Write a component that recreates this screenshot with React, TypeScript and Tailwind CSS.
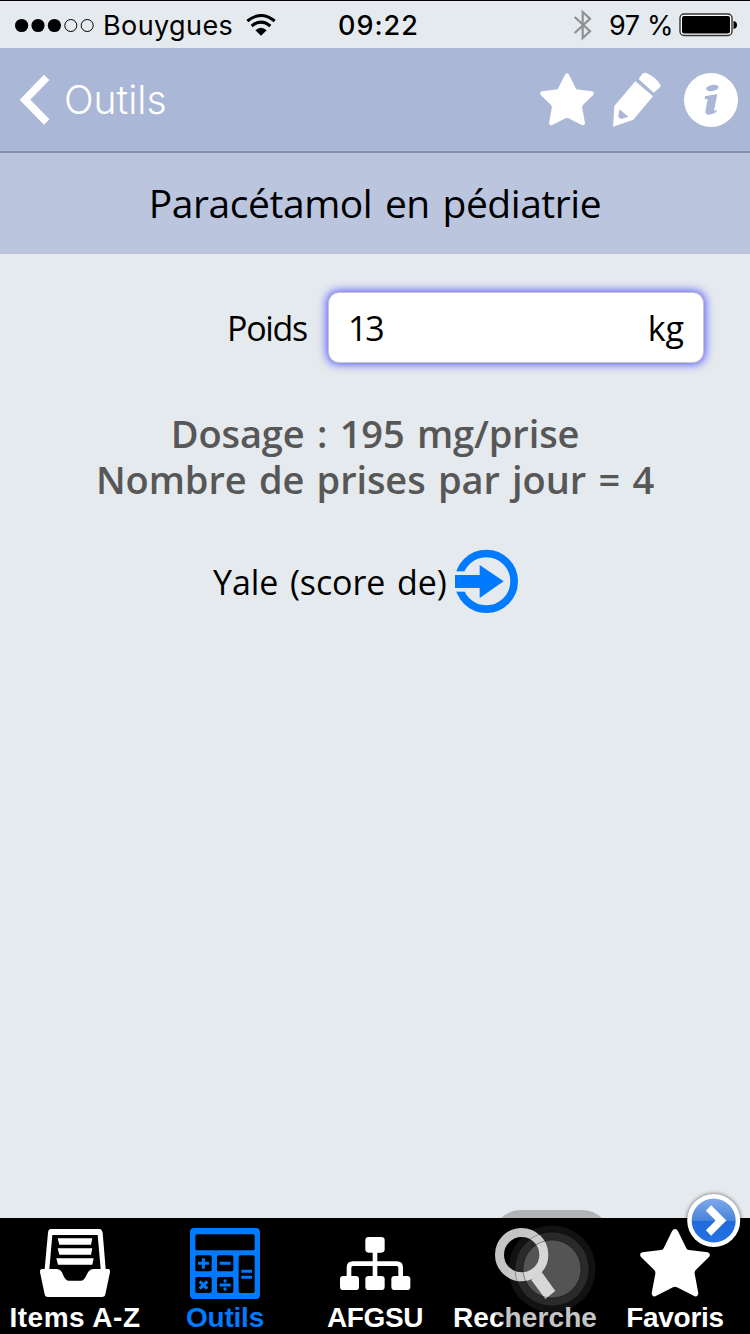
import React, { useState } from 'react';

interface TabItemProps {
  label: string;
  active?: boolean;
  labelClass: string;
  children: React.ReactNode;
}

const STAR_PATH =
  'M126 10 Q129 3 135 3 Q141 3 144 10 L169 61 Q171 66 177 66 L233 73 Q244 77 237 87 L198 125 Q193 130 194 137 L205 196 Q204 207 194 205 L141 178 Q135 175 129 178 L76 205 Q66 207 65 196 L76 137 Q77 130 72 125 L33 87 Q26 77 37 73 L93 66 Q99 66 101 61 Z';

const TabItem: React.FC<TabItemProps> = ({ label, active, labelClass, children }) => {
  return (
    <button className={`flex flex-col items-center w-[150px] pt-2.5 ${active ? 'text-[#007aff]' : 'text-white'}`}>
      <svg width="90" height="74" viewBox="0 0 270 222" fill="currentColor">
        {children}
      </svg>
      <span className={`h-8 leading-8 text-[28px] font-bold whitespace-nowrap ${labelClass}`}>{label}</span>
    </button>
  );
};

const StatusBar: React.FC = () => {
  return (
    <div className="flex items-center h-12 border-t border-black font-[Inter,sans-serif] text-[27px] leading-[48px] whitespace-nowrap">
      <svg className="ml-[14px]" width="82" height="16" viewBox="0 0 82 16">
        <circle cx="7.6" cy="8.5" r="6.6" />
        <circle cx="24" cy="8.5" r="6.6" />
        <circle cx="40.4" cy="8.5" r="6.6" />
        <circle cx="56.8" cy="8.5" r="6" fill="none" stroke="#000" />
        <circle cx="73.2" cy="8.5" r="6" fill="none" stroke="#000" />
      </svg>
      <span className="ml-[7px] w-[130px] pt-[3px] tracking-[0.4px]">Bouygues</span>
      <svg className="ml-[13px]" width="30" height="22" viewBox="0 0 90 66">
        <path d="M4 21 Q45 -12 86 21" fill="none" stroke="#000" strokeWidth="9" />
        <path d="M17 36 Q45 13 73 36" fill="none" stroke="#000" strokeWidth="9" />
        <path d="M28 49 Q45 34 62 49 L45 65 Z" />
      </svg>
      <span className="ml-[62px] w-[84px] pt-[3px] font-medium tracking-[1px]">09:22</span>
      <svg className="ml-[151px]" width="20" height="32" viewBox="0 0 60 96">
        <path d="M5 24 L51 67 L29 87 V9 L51 29 L5 72" fill="none" stroke="#8d9093" strokeWidth="6.5" />
      </svg>
      <span className="ml-[16px] w-[64px] pt-[3px] tracking-[-0.4px]">97 %</span>
      <svg className="ml-[6px]" width="58" height="24" viewBox="0 0 58 24">
        <rect x="1" y="1" width="52" height="21.5" rx="4" fill="#fff" stroke="#333" strokeWidth="1.4" />
        <rect x="3" y="3" width="48" height="17.5" rx="2" />
        <path d="M54.5 8 Q58 8.5 58 12 Q58 15.5 54.5 16 Z" />
      </svg>
    </div>
  );
};

const NavBar: React.FC = () => {
  return (
    <div className="flex items-center h-[105px] bg-[#aab7d6] border-b-2 border-[#878fa9] text-white">
      <svg className="ml-[18px]" width="34" height="52" viewBox="54 222 102 156">
        <path d="M140 232 L75 299 L140 366" fill="none" stroke="#fff" strokeWidth="23" />
      </svg>
      <span className="ml-[12px] w-[110px] font-[Inter,sans-serif] font-light text-[39px] leading-[52px]">Outils</span>
      <svg className="ml-auto" width="56" height="56" viewBox="60 215 168 168" fill="#fff">
        <path d={STAR_PATH} transform="translate(36.9 216.7) scale(0.771)" />
      </svg>
      <svg className="ml-[16px]" width="50" height="56" viewBox="277 214 150 168" fill="#fff">
        <path d="M357 235 L367 221 Q373 212 386 220 Q408 230 421 251 Q425 257 419 262 L402 276 Z" />
        <path fillRule="evenodd" d="M347 242 L400 287 L341 357 L280 378 L284 316 Z M299 326 L296 349 L304 355 L326 348 Z" />
      </svg>
      <svg className="ml-[21px] mr-[11px]" width="56" height="56" viewBox="489 216 168 168">
        <circle cx="573" cy="300" r="81" fill="#fff" />
        <ellipse cx="577" cy="264" rx="19" ry="9" fill="#aab7d6" transform="rotate(-12 577 264)" />
        <path d="M555 289 L592 282 L582 332 L591 330 L588 337 Q575 346 562 344 Q555 342 556 334 L563 297 L554 298 Z" fill="#aab7d6" />
      </svg>
    </div>
  );
};

const TabBar: React.FC = () => {
  return (
    <div className="relative flex h-[116px] bg-black font-['Liberation_Sans',Arial,sans-serif]">
      <TabItem label="Items A-Z" labelClass="tracking-[0.5px]">
        <path
          fillRule="evenodd"
          d="M62 3 H208 Q216 4 218 14 L227 123 H236 Q241 124 240 133 L226 199 Q225 207 216 207 H54 Q45 207 44 199 L30 133 Q29 124 35 123 H44 L54 14 Q55 4 62 3 Z M67 21 L58 123 H80 Q94 124 99 140 Q106 158 117 158 H152 Q163 158 170 140 Q177 124 190 123 H212 L203 21 Z"
        />
        <path d="M83 31 H187 L183 50 H88 Z M83 61 H187 L183 80 H88 Z M79 91 H191 L187 110 H84 Z" />
      </TabItem>
      <TabItem label="Outils" active labelClass="tracking-[-0.2px]">
        <path
          fillRule="evenodd"
          d="M42 0 H228 Q240 0 240 12 V201 Q240 213 228 213 H42 Q30 213 30 201 V12 Q30 0 42 0 Z M51 19 Q46 19 46 24 V62 Q46 67 51 67 H219 Q224 67 224 62 V24 Q224 19 219 19 Z M51 82 Q46 82 46 87 V125 Q46 130 51 130 H90 Q95 130 95 125 V87 Q95 82 90 82 Z M116 82 Q111 82 111 87 V125 Q111 130 116 130 H155 Q160 130 160 125 V87 Q160 82 155 82 Z M181 82 Q176 82 176 87 V190 Q176 195 181 195 H219 Q224 195 224 190 V87 Q224 82 219 82 Z M51 147 Q46 147 46 152 V190 Q46 195 51 195 H90 Q95 195 95 190 V152 Q95 147 90 147 Z M116 147 Q111 147 111 152 V190 Q111 195 116 195 H155 Q160 195 160 190 V152 Q160 147 155 147 Z"
        />
        <path
          d="M70 91 V122 M54 106 H87 M119 106 H152 M184 130 H216 M184 148 H216 M59 160 L82 182 M82 160 L59 182 M119 171 H152"
          stroke="currentColor"
          strokeWidth="9"
        />
        <circle cx="135" cy="159" r="5" />
        <circle cx="135" cy="183" r="5" />
      </TabItem>
      <TabItem label="AFGSU" labelClass="tracking-[-0.4px]">
        <rect x="106" y="27" width="58" height="47" rx="10" />
        <rect x="30" y="144" width="57" height="42" rx="10" />
        <rect x="106" y="144" width="58" height="42" rx="10" />
        <rect x="184" y="144" width="57" height="42" rx="10" />
        <path d="M135 70 V150 M57 150 V119 Q57 107 69 107 H200 Q212 107 212 119 V150" fill="none" stroke="currentColor" strokeWidth="14" />
      </TabItem>
      <TabItem label="Recherche" labelClass="tracking-[0.1px]">
        <circle cx="125" cy="80" r="66.5" fill="none" stroke="currentColor" strokeWidth="27" />
        <path d="M154 156 L185 132 L226 189 L196 213 Z" />
      </TabItem>
      <TabItem label="Favoris" labelClass="tracking-[-0.3px]">
        <path d={STAR_PATH} />
      </TabItem>

      {/* floating assistive button */}
      <div className="absolute left-[492px] top-[-8px] w-[119px] h-[120px] rounded-[29px] bg-black/23">
        <svg width="119" height="120" viewBox="0 0 119 120" fill="#fff">
          <circle cx="60" cy="59" r="43.5" fillOpacity="0.07" />
          <circle cx="60" cy="59" r="37" fillOpacity="0.1" stroke="#000" strokeOpacity="0.3" />
          <circle cx="60" cy="59" r="29" fillOpacity="0.2" stroke="#000" strokeOpacity="0.4" />
        </svg>
      </div>

      <svg className="absolute left-[684px] top-[-27px] drop-shadow-[0_0_2px_rgba(0,0,0,0.6)]" width="60" height="60" viewBox="0 0 60 60">
        <defs>
          <linearGradient id="gloss" x1="0" y1="0" x2="0" y2="1">
            <stop offset="0" stopColor="#80aae9" />
            <stop offset="0.5" stopColor="#4983dc" />
            <stop offset="0.52" stopColor="#226bdb" />
            <stop offset="1" stopColor="#2471e2" />
          </linearGradient>
        </defs>
        <circle cx="29.7" cy="29.5" r="26.5" fill="#fff" />
        <circle cx="29.7" cy="29.5" r="22" fill="url(#gloss)" />
        <path d="M24.5 17 L37 29.5 L24.5 42" fill="none" stroke="#fff" strokeWidth="7.5" />
      </svg>
    </div>
  );
};

const App: React.FC = () => {
  const [weight, setWeight] = useState('13');
  const dose = Number(weight) * 15;

  return (
    <div className="flex flex-col w-[750px] h-[1334px] overflow-hidden bg-[#e5eaee] text-black">
      <StatusBar />
      <NavBar />
      <h1 className="h-[101px] bg-[#bcc5de] text-center font-['Open_Sans',sans-serif] text-[39px] leading-[99px] tracking-[-0.45px] [word-spacing:3px]">
        Paracétamol en pédiatrie
      </h1>

      <main className="flex-1 font-['Open_Sans',sans-serif] text-[34px]">
        <div className="flex items-center mt-[38px] ml-[227px]">
          <label htmlFor="weight" className="w-[101px] pt-0.5 tracking-[-1.3px]">
            Poids
          </label>
          <div className="flex items-center w-[376px] h-[71px] px-[19px] bg-white border border-[#c5c5cc] rounded-[11px] shadow-[0_0_9px_2px_#6666ff]">
            <input
              id="weight"
              className="flex-1 min-w-0 pt-0.5 outline-none tracking-[-2.2px]"
              value={weight}
              onChange={(e) => setWeight(e.target.value)}
            />
            <span className="pt-0.5">kg</span>
          </div>
        </div>

        <p className="mt-[47px] text-center text-[38px] leading-[46px] font-semibold text-[#575757] tracking-[-0.1px] [word-spacing:2.6px]">
          Dosage : {dose} mg/prise
          <br />
          Nombre de prises par jour = 4
        </p>

        <div className="flex items-center mt-[47px] ml-[213px]">
          <span className="w-[241px] leading-[64px] whitespace-nowrap tracking-[-0.1px] [word-spacing:3px]">Yale (score de)</span>
          <svg width="66" height="66" viewBox="792 57 198 198" fill="#007aff">
            <circle cx="889" cy="154" r="83.5" fill="none" stroke="#007aff" strokeWidth="23" />
            <rect x="792" y="124" width="50" height="61" fill="#e5eaee" />
            <path d="M795 135 H869 V105 L941 154 L869 204 V174 H795 Z" />
          </svg>
        </div>
      </main>

      <TabBar />
    </div>
  );
};

export default App;
